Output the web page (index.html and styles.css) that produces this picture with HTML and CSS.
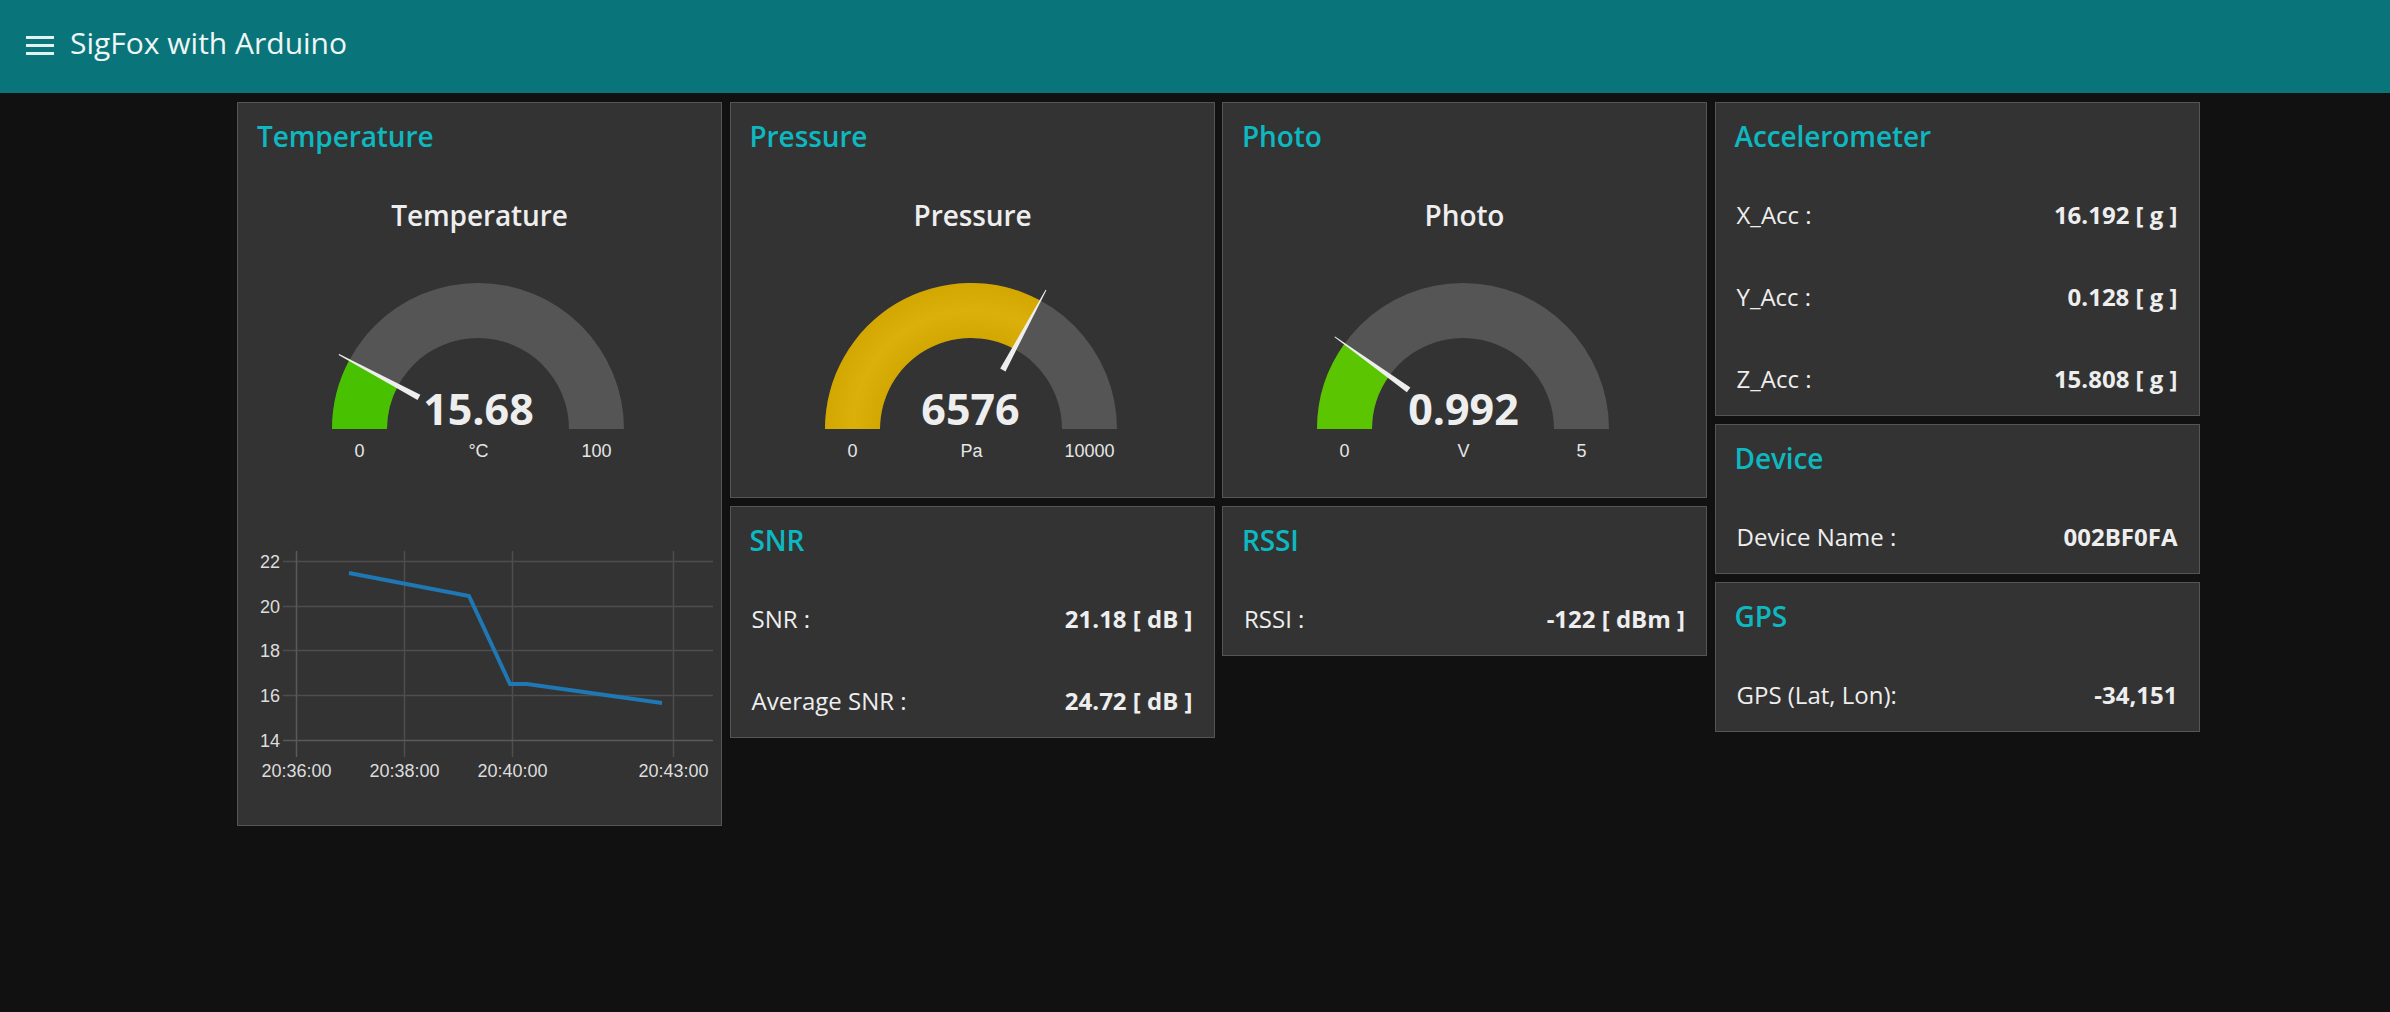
FILE: index.html
```html
<!DOCTYPE html>
<html lang="en">
<head>
<meta charset="utf-8">
<title>SigFox with Arduino</title>
<link rel="stylesheet" href="styles.css">
</head>
<body>
<header class="toolbar">
  <svg class="menu-icon" width="28" height="19" viewBox="0 0 28 19" aria-hidden="true">
    <rect x="0" y="0" width="28" height="3"/>
    <rect x="0" y="8" width="28" height="3"/>
    <rect x="0" y="16" width="28" height="3"/>
  </svg>
  <h1 class="app-title">SigFox with Arduino</h1>
</header>

<main class="dashboard">
  <div class="column">
    <section class="group">
      <h2 class="group-title">Temperature</h2>
      <div class="widget widget-4">
        <svg class="gauge" width="483" height="319" viewBox="0 0 483 319">
          <text class="g-title" x="241.5" y="48" text-anchor="middle">Temperature</text>
          <path class="g-track" d="M94 251 A146 146 0 0 1 386 251 L331 251 A91 91 0 0 0 149 251 Z"/>
          <path class="g-green1" d="M94 251 A146 146 0 0 1 111.36 181.96 L159.82 207.97 A91 91 0 0 0 149 251 Z"/>
          <polygon class="g-needle" points="182.39,216.68 101.2,176.0 100.6,176.9 179.55,221.96"/>
          <text class="g-value" x="240.5" y="247" text-anchor="middle">15.68</text>
          <text class="g-label" x="121.5" y="279" text-anchor="middle">0</text>
          <text class="g-label" x="240.5" y="279" text-anchor="middle">°C</text>
          <text class="g-label" x="358.5" y="279" text-anchor="middle">100</text>
        </svg>
      </div>
      <div class="widget widget-4">
        <svg class="chart" width="483" height="319" viewBox="0 0 483 319">
          <g class="c-grid">
            <line x1="45" y1="55.5" x2="475" y2="55.5"/>
            <line x1="45" y1="100.5" x2="475" y2="100.5"/>
            <line x1="45" y1="144.5" x2="475" y2="144.5"/>
            <line x1="45" y1="189.5" x2="475" y2="189.5"/>
            <line x1="166.5" y1="45" x2="166.5" y2="251"/>
            <line x1="274.5" y1="45" x2="274.5" y2="251"/>
            <line x1="435.5" y1="45" x2="435.5" y2="251"/>
          </g>
          <g class="c-axis">
            <line x1="45" y1="234.5" x2="475" y2="234.5"/>
            <line x1="58.5" y1="45" x2="58.5" y2="251"/>
          </g>
          <g class="c-text">
            <text x="42" y="62" text-anchor="end">22</text>
            <text x="42" y="107" text-anchor="end">20</text>
            <text x="42" y="151" text-anchor="end">18</text>
            <text x="42" y="196" text-anchor="end">16</text>
            <text x="42" y="241" text-anchor="end">14</text>
            <text x="58.5" y="271" text-anchor="middle">20:36:00</text>
            <text x="166.5" y="271" text-anchor="middle">20:38:00</text>
            <text x="274.5" y="271" text-anchor="middle">20:40:00</text>
            <text x="435.5" y="271" text-anchor="middle">20:43:00</text>
          </g>
          <polyline class="c-line" points="111,67 231,90 272,178 289,178 424,197"/>
        </svg>
      </div>
    </section>
  </div>

  <div class="column">
    <section class="group">
      <h2 class="group-title">Pressure</h2>
      <div class="widget widget-4">
        <svg class="gauge" width="483" height="319" viewBox="0 0 483 319">
          <defs>
            <radialGradient id="yellowGrad" gradientUnits="userSpaceOnUse" cx="240" cy="251" r="146">
              <stop offset="0.62" stop-color="#d3a700"/>
              <stop offset="0.81" stop-color="#dbb00b"/>
              <stop offset="1" stop-color="#d3a700"/>
            </radialGradient>
          </defs>
          <text class="g-title" x="241.5" y="48" text-anchor="middle">Pressure</text>
          <path class="g-track" d="M94 251 A146 146 0 0 1 386 251 L331 251 A91 91 0 0 0 149 251 Z"/>
          <path class="g-yellow" d="M94 251 A146 146 0 0 1 309.38 122.53 L283.24 170.93 A91 91 0 0 0 149 251 Z"/>
          <polygon class="g-needle" points="274.48,193.48 315.4,112.2 314.6,111.8 269.20,190.62"/>
          <text class="g-value" x="239.5" y="247" text-anchor="middle">6576</text>
          <text class="g-label" x="121.5" y="279" text-anchor="middle">0</text>
          <text class="g-label" x="240.5" y="279" text-anchor="middle">Pa</text>
          <text class="g-label" x="358.5" y="279" text-anchor="middle">10000</text>
        </svg>
      </div>
    </section>
    <section class="group">
      <h2 class="group-title">SNR</h2>
      <div class="widget row"><span class="label">SNR :</span><span class="value">21.18 [ dB ]</span></div>
      <div class="widget row"><span class="label">Average SNR :</span><span class="value">24.72 [ dB ]</span></div>
    </section>
  </div>

  <div class="column">
    <section class="group">
      <h2 class="group-title">Photo</h2>
      <div class="widget widget-4">
        <svg class="gauge" width="483" height="319" viewBox="0 0 483 319">
          <text class="g-title" x="241.5" y="48" text-anchor="middle">Photo</text>
          <path class="g-track" d="M94 251 A146 146 0 0 1 386 251 L331 251 A91 91 0 0 0 149 251 Z"/>
          <path class="g-green2" d="M94 251 A146 146 0 0 1 121.45 165.79 L166.11 197.89 A91 91 0 0 0 149 251 Z"/>
          <polygon class="g-needle" points="187.35,209.46 112.1,158.5 111.3,159.1 183.85,214.34"/>
          <text class="g-value" x="240.5" y="247" text-anchor="middle">0.992</text>
          <text class="g-label" x="121.5" y="279" text-anchor="middle">0</text>
          <text class="g-label" x="240.5" y="279" text-anchor="middle">V</text>
          <text class="g-label" x="358.5" y="279" text-anchor="middle">5</text>
        </svg>
      </div>
    </section>
    <section class="group">
      <h2 class="group-title">RSSI</h2>
      <div class="widget row"><span class="label">RSSI :</span><span class="value">-122 [ dBm ]</span></div>
    </section>
  </div>

  <div class="column">
    <section class="group">
      <h2 class="group-title">Accelerometer</h2>
      <div class="widget row"><span class="label">X_Acc :</span><span class="value">16.192 [ g ]</span></div>
      <div class="widget row"><span class="label">Y_Acc :</span><span class="value">0.128 [ g ]</span></div>
      <div class="widget row"><span class="label">Z_Acc :</span><span class="value">15.808 [ g ]</span></div>
    </section>
    <section class="group">
      <h2 class="group-title">Device</h2>
      <div class="widget row"><span class="label">Device Name :</span><span class="value">002BF0FA</span></div>
    </section>
    <section class="group">
      <h2 class="group-title">GPS</h2>
      <div class="widget row"><span class="label">GPS (Lat, Lon):</span><span class="value">-34,151</span></div>
    </section>
  </div>
</main>
</body>
</html>
```

FILE: styles.css
```css
html, body {
  margin: 0;
  padding: 0;
}

body {
  background: #111111;
  color: #eeeeee;
  font-family: "Open Sans", "Noto Sans", "DejaVu Sans", sans-serif;
  min-height: 1012px;
}

.toolbar {
  box-sizing: border-box;
  height: 93px;
  background: #097479;
  display: flex;
  align-items: flex-start;
  padding: 23px 0 0 26px;
}

.menu-icon {
  display: block;
  margin-top: 13px;
  fill: #e4f1f1;
}

.app-title {
  margin: 0 0 0 16px;
  font-size: 30px;
  line-height: 40px;
  font-weight: 400;
  color: #eef6f6;
}

.dashboard {
  display: flex;
  align-items: flex-start;
  gap: 7.5px;
  padding: 9px 0 0 237px;
}

.column {
  display: flex;
  flex-direction: column;
  gap: 8px;
  width: 485px;
}

.group {
  box-sizing: border-box;
  width: 485px;
  background: #333333;
  border: 1px solid #555555;
  display: flex;
  flex-direction: column;
  gap: 9px;
}

.group-title {
  box-sizing: border-box;
  height: 75px;
  margin: 0 0 -9px 0;
  padding: 13px 0 0 19px;
  font-size: 28px;
  line-height: 40px;
  font-weight: 600;
  letter-spacing: -0.1px;
  color: #0eb8c0;
}

.widget {
  height: 73px;
}

.widget-4 {
  height: 319px;
}

.row {
  box-sizing: border-box;
  display: flex;
  align-items: center;
  justify-content: space-between;
  padding: 0 21px 0 21px;
  font-size: 24px;
  line-height: 32px;
}

.label {
  color: #eeeeee;
}

.value {
  font-weight: 700;
  color: #eeeeee;
}

.gauge, .chart {
  display: block;
}

.g-title {
  font-family: "Open Sans", "Noto Sans", sans-serif;
  font-size: 28px;
  font-weight: 600;
  letter-spacing: -0.1px;
  fill: #eeeeee;
}

.g-track {
  fill: #555555;
}

.g-green1 {
  fill: #48c200;
}

.g-green2 {
  fill: #5ac500;
}

.g-yellow {
  fill: url(#yellowGrad);
}

.g-needle {
  fill: #eeeeee;
}

.g-value {
  font-family: "Open Sans", "Noto Sans", sans-serif;
  font-size: 43px;
  font-weight: 700;
  fill: #eeeeee;
}

.g-label {
  font-family: "Liberation Sans", Arial, sans-serif;
  font-size: 18px;
  fill: #e6e6e6;
}

.c-grid line {
  stroke: #4e4e4e;
  stroke-width: 1.5;
}

.c-axis line {
  stroke: #5a5a5a;
  stroke-width: 1.5;
}

.c-text text {
  font-family: "Liberation Sans", Arial, sans-serif;
  font-size: 18px;
  fill: #dddddd;
}

.c-line {
  fill: none;
  stroke: #1f77b4;
  stroke-width: 4;
  stroke-linejoin: miter;
}
```
